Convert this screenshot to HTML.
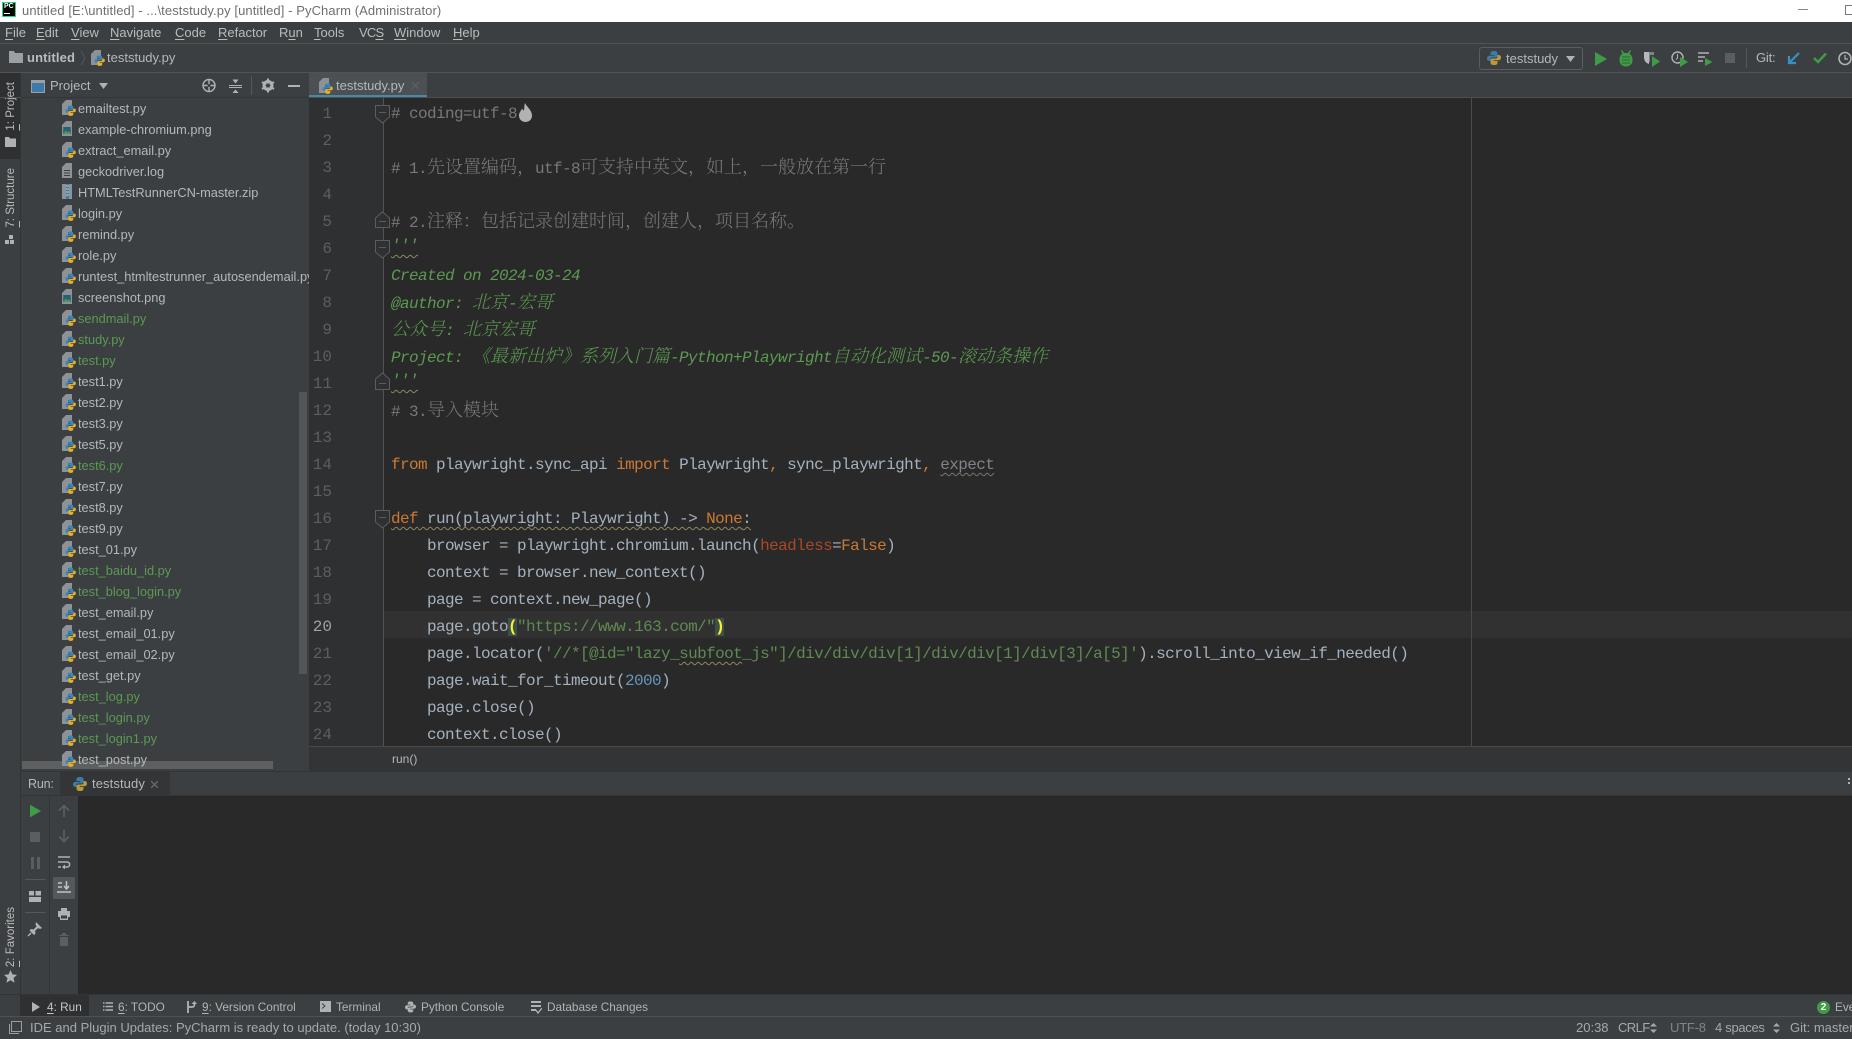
<!DOCTYPE html>
<html><head><meta charset="utf-8"><style>
html,body{margin:0;padding:0;background:#3c3f41}
body{width:1852px;height:1038px;position:relative;overflow:hidden;font-family:"Liberation Sans","Noto Sans CJK SC",sans-serif;color:#bbbbbb;font-size:13px}
.a{position:absolute;white-space:nowrap}
.m{top:22px;height:22px;line-height:22px;font-size:13px;color:#bbb}
u{text-decoration-thickness:1px;text-underline-offset:2px}
#files{left:21px;top:97.5px;width:288px;height:673px;overflow:hidden}
#files div{position:relative;height:21px;line-height:21px;padding-left:57px;font-size:12.8px;color:#b4b8ba;white-space:nowrap}
#files div.g{color:#5a9a52}
#files svg{position:absolute;left:41px;top:2px}
.l{position:absolute;left:391px;height:27px;line-height:27px;margin:0;font-family:"Liberation Mono","Noto Serif CJK SC",monospace;font-size:16px;letter-spacing:-.6px;color:#a4b1bf;white-space:pre}
.l .c{font-family:"Noto Serif CJK SC","Noto Sans CJK SC",serif;font-size:18px;font-weight:300;letter-spacing:0}
.cm{color:#787878}
.ds{color:#5c9a52;font-style:italic}
.k{color:#cc7832}
.s{color:#5f8a52}
.n{position:absolute;width:24px;left:308px;text-align:right;height:27px;line-height:27px;font-family:"Liberation Mono",monospace;font-size:16px;color:#5c5f61;margin-top:1px}
.w{text-decoration:underline wavy #8a8a60 1px;text-underline-offset:3px}
.b{font-size:11.8px;height:22px;line-height:22px;top:996px;color:#b0b4b6}
.st{font-size:13px;height:22px;line-height:22px;top:1017px;color:#a5a9ab}
.v{writing-mode:vertical-rl;transform:rotate(180deg);font-size:11.5px;color:#bbb;left:4px;line-height:14px}
</style></head><body>
<svg width="0" height="0" style="position:absolute"><defs>
<symbol id="py" viewBox="0 0 14 16"><path d="M0 4 L4 0 H10 V6 H6 V15 H0Z" fill="#8d9296"/><g transform="translate(3.5,5.5) scale(.74)"><path d="M7 0 C4 0 3.5 1 3.5 2.5 V4 H7.2 V4.8 H2.5 C1 4.8 0 6 0 7.3 C0 9 1 10 2.3 10 H3.5 V8.2 C3.5 7 4.5 6.5 5.5 6.5 H8.5 C9.8 6.5 10.5 5.7 10.5 4.5 V2.5 C10.5 1 9.5 0 7 0Z" fill="#3a85bd"/><path d="M7 14 C10 14 10.5 13 10.5 11.5 V10 H6.8 V9.2 H11.5 C13 9.2 14 8 14 6.7 C14 5 13 4 11.7 4 H10.5 V5.8 C10.5 7 9.5 7.5 8.5 7.5 H5.5 C4.2 7.5 3.5 8.3 3.5 9.5 V11.5 C3.5 13 4.5 14 7 14Z" fill="#e6b02c"/></g></symbol>
<symbol id="img" viewBox="0 0 14 16"><path d="M0 4 L4 0 H10 V15 H0Z" fill="#8d9296"/><rect x="1.2" y="6" width="7.6" height="7" fill="#2a5e78"/><path d="M1.2 13 L4 9.5 L6 11.5 L7.5 10 L8.8 13Z" fill="#4f9a58"/></symbol>
<symbol id="log" viewBox="0 0 14 16"><path d="M0 4 L4 0 H10 V15 H0Z" fill="#8d9296"/><path d="M2 7.5H8M2 10H8M2 12.5H8" stroke="#3c3f41" stroke-width="1"/></symbol>
<symbol id="zip" viewBox="0 0 14 16"><rect x="0" y="0" width="10" height="15" fill="#8d9296"/><rect x="4" y="0" width="3" height="15" fill="#3a7ca5"/><path d="M4 2h3M4 5h3M4 8h3M4 11h3" stroke="#c8d0d4" stroke-width="1"/></symbol>
<symbol id="pyb" viewBox="0 0 14 14"><path d="M7 0 C4 0 3.5 1 3.5 2.5 V4 H7.2 V4.8 H2.5 C1 4.8 0 6 0 7.3 C0 9 1 10 2.3 10 H3.5 V8.2 C3.5 7 4.5 6.5 5.5 6.5 H8.5 C9.8 6.5 10.5 5.7 10.5 4.5 V2.5 C10.5 1 9.5 0 7 0Z" fill="#3c7ba8"/><path d="M7 14 C10 14 10.5 13 10.5 11.5 V10 H6.8 V9.2 H11.5 C13 9.2 14 8 14 6.7 C14 5 13 4 11.7 4 H10.5 V5.8 C10.5 7 9.5 7.5 8.5 7.5 H5.5 C4.2 7.5 3.5 8.3 3.5 9.5 V11.5 C3.5 13 4.5 14 7 14Z" fill="#b99a3a"/></symbol>
<symbol id="pl" viewBox="0 0 12 14"><path d="M0 0 L12 7 L0 14Z" fill="#3f9b46"/></symbol>
</defs></svg>

<!-- title bar -->
<div class="a" style="left:0;top:0;width:1852px;height:22px;background:#fff"></div>
<div class="a" style="left:2px;top:2px;width:14px;height:15px;background:#000;border:1px solid #21d789;box-sizing:border-box;color:#fff;font:bold 7px/8px 'Liberation Sans',sans-serif;padding-left:1px">PC<div style="width:6px;height:1px;background:#fff;margin-top:2px"></div></div>
<div class="a" style="left:22px;top:0;height:22px;line-height:21px;font-size:13px;letter-spacing:.09px;color:#6f6f6f">untitled [E:\untitled] - ...\teststudy.py [untitled] - PyCharm (Administrator)</div>
<div class="a" style="left:1798px;top:9px;width:10px;height:1px;background:#8a8a8a"></div>
<div class="a" style="left:1845px;top:5px;width:8px;height:8px;border:1px solid #777"></div>

<!-- menu -->
<div class="a m" style="left:5px"><u>F</u>ile</div>
<div class="a m" style="left:36px"><u>E</u>dit</div>
<div class="a m" style="left:71px"><u>V</u>iew</div>
<div class="a m" style="left:110px"><u>N</u>avigate</div>
<div class="a m" style="left:175px"><u>C</u>ode</div>
<div class="a m" style="left:218px"><u>R</u>efactor</div>
<div class="a m" style="left:279px">R<u>u</u>n</div>
<div class="a m" style="left:314px"><u>T</u>ools</div>
<div class="a m" style="left:359px;letter-spacing:-.8px">VC<u>S</u></div>
<div class="a m" style="left:394px"><u>W</u>indow</div>
<div class="a m" style="left:453px"><u>H</u>elp</div>
<div class="a" style="left:0;top:43px;width:1852px;height:1px;background:#515455"></div>

<!-- nav bar -->
<svg class="a" style="left:9px;top:51px" width="14" height="12"><path d="M0 0H5L6 2H14V12H0Z" fill="#9aa0a4"/></svg>
<div class="a" style="left:27px;top:47px;line-height:22px;font-weight:bold;font-size:13px;letter-spacing:.15px;color:#b8bcbe">untitled</div>
<svg class="a" style="left:80px;top:50px" width="6" height="16"><path d="M1 1L5 8L1 15" fill="none" stroke="#55585a"/></svg>
<svg class="a" style="left:91px;top:50px" width="14" height="16"><use href="#py"/></svg>
<div class="a" style="left:107px;top:47px;line-height:22px;font-size:13px;color:#b4b8ba">teststudy.py</div>

<!-- run config -->
<div class="a" style="left:1479px;top:47px;width:102px;height:21px;border:1px solid #5a5d5f;border-radius:3px"></div>
<svg class="a" style="left:1487px;top:51px" width="14" height="14"><use href="#pyb"/></svg>
<div class="a" style="left:1506px;top:48px;line-height:22px;font-size:13px;color:#b4b8ba">teststudy</div>
<svg class="a" style="left:1566px;top:56px" width="9" height="6"><path d="M0 0H9L4.5 6Z" fill="#aeb2b4"/></svg>
<svg class="a" style="left:1595px;top:52px" width="12" height="14"><use href="#pl"/></svg>
<svg class="a" style="left:1619px;top:50px" width="14" height="17"><path d="M3 0L5 3H9L11 0L12 1L10.5 3.5C12.5 5 13.5 7 13.5 10C13.5 14 11 16.5 7 16.5C3 16.5 .5 14 .5 10C.5 7 1.5 5 3.5 3.5L2 1Z" fill="#3f9b46"/><path d="M3 7H11M3 10H11M3 13H11" stroke="#2c6a30"/></svg>
<svg class="a" style="left:1644px;top:51px" width="16" height="16"><path d="M0 1H5V13C2 12 0 10 0 6Z" fill="#b4b8ba"/><path d="M5 1H10V4H6V11H5Z" fill="#7f8385"/><path d="M8 5L16 10.5L8 16Z" fill="#3f9b46"/></svg>
<svg class="a" style="left:1671px;top:51px" width="17" height="16"><circle cx="6.5" cy="6.5" r="5.5" fill="none" stroke="#aeb2b4" stroke-width="1.4"/><path d="M6.5 3V7L5 8.5" fill="none" stroke="#aeb2b4"/><path d="M9 6L17 11L9 16Z" fill="#3f9b46"/></svg>
<svg class="a" style="left:1698px;top:52px" width="15" height="14"><path d="M0 1H11M0 5H7M0 9H5" stroke="#aeb2b4" stroke-width="1.6"/><path d="M7 6L14.5 10L7 14Z" fill="#3f9b46"/></svg>
<div class="a" style="left:1725px;top:53px;width:10px;height:10px;background:#5c5d5f"></div>
<div class="a" style="left:1746px;top:48px;width:1px;height:20px;background:#55585a"></div>
<div class="a" style="left:1756px;top:47px;line-height:22px;font-size:13px;letter-spacing:-.2px;color:#b4b8ba">Git:</div>
<svg class="a" style="left:1787px;top:52px" width="13" height="13"><path d="M12 1L2.5 10.5M2 4V11H9" fill="none" stroke="#3592c4" stroke-width="2.2"/></svg>
<svg class="a" style="left:1813px;top:52px" width="14" height="12"><path d="M1 6L5 10L13 1.5" fill="none" stroke="#3f9b46" stroke-width="2.4"/></svg>
<svg class="a" style="left:1838px;top:51px" width="14" height="15"><circle cx="7" cy="7.5" r="6" fill="none" stroke="#aeb2b4" stroke-width="1.6"/><path d="M7 4V8H10" fill="none" stroke="#aeb2b4" stroke-width="1.2"/></svg>
<div class="a" style="left:0;top:72px;width:1852px;height:1px;background:#515455"></div>

<!-- left stripe -->
<div class="a" style="left:0;top:73px;width:20px;height:86px;background:#2e3032"></div>
<div class="a" style="left:20px;top:73px;width:1px;height:921px;background:#323436"></div>
<div class="a v" style="top:82px"><u>1</u>: Project</div>
<svg class="a" style="left:5px;top:137px" width="11" height="10"><path d="M0 0H4L5 1.5H11V10H0Z" fill="#aeb2b4"/></svg>
<div class="a v" style="top:168px"><u>7</u>: Structure</div>
<svg class="a" style="left:5px;top:235px" width="10" height="10"><path d="M4 0H8V4H4ZM0 5H4V9H0ZM5 5H9V9H5Z" fill="#aeb2b4"/></svg>
<div class="a v" style="top:907px"><u>2</u>: Favorites</div>
<svg class="a" style="left:4px;top:970px" width="13" height="13"><path d="M6.5 0L8.4 4.4L13 4.9L9.5 8L10.6 12.8L6.5 10.2L2.4 12.8L3.5 8L0 4.9L4.6 4.4Z" fill="#aeb2b4"/></svg>

<!-- project toolbar -->
<svg class="a" style="left:31px;top:80px" width="14" height="13"><rect x=".5" y=".5" width="13" height="12" fill="#3c7ba8" stroke="#9aa0a4"/><rect x="1" y="1" width="12" height="2" fill="#9aa0a4"/></svg>
<div class="a" style="left:50px;top:75px;line-height:22px;font-size:13px;color:#b4b8ba">Project</div>
<svg class="a" style="left:99px;top:83px" width="9" height="6"><path d="M0 0H9L4.5 6Z" fill="#aeb2b4"/></svg>
<svg class="a" style="left:202px;top:78px" width="14" height="15"><circle cx="7" cy="7.5" r="6" fill="none" stroke="#aeb2b4" stroke-width="1.4"/><path d="M7 1V14M1 7.5H13" stroke="#aeb2b4" stroke-width="1.4"/><circle cx="7" cy="7.5" r="1.5" fill="#3c3f41"/></svg>
<svg class="a" style="left:229px;top:78px" width="13" height="15"><path d="M0 7.5H13M0 9.5H13" stroke="#aeb2b4" stroke-width="1"/><path d="M6.5 5.5L3.5 1.5H9.5ZM6.5 11.5L3.5 15H9.5Z" fill="#aeb2b4"/></svg>
<div class="a" style="left:251px;top:76px;width:1px;height:19px;background:#55585a"></div>
<svg class="a" style="left:261px;top:78px" width="14" height="15"><circle cx="7" cy="7.5" r="4.2" fill="none" stroke="#aeb2b4" stroke-width="2.6"/><path d="M7 .5V14.5M1 4L13 11M1 11L13 4" stroke="#aeb2b4" stroke-width="2"/><circle cx="7" cy="7.5" r="2" fill="#3c3f41"/></svg>
<div class="a" style="left:288px;top:85px;width:12px;height:2px;background:#aeb2b4"></div>

<!-- tab -->
<div class="a" style="left:309px;top:73px;width:118px;height:24px;background:#4c5052"></div>
<div class="a" style="left:309px;top:95px;width:118px;height:2px;background:#4a88a8"></div>
<svg class="a" style="left:319px;top:78px" width="14" height="16"><use href="#py"/></svg>
<div class="a" style="left:336px;top:75px;line-height:22px;font-size:13px;color:#b4b8ba">teststudy.py</div>
<svg class="a" style="left:412px;top:82px" width="7" height="7"><path d="M0 0L7 7M7 0L0 7" stroke="#5f6365" stroke-width="1.1"/></svg>
<div class="a" style="left:0;top:97px;width:1852px;height:1px;background:#4b4e50"></div>
<div class="a" style="left:21px;top:97px;width:288px;height:1px;background:#333537"></div>

<!-- file tree -->
<div class="a" style="left:299px;top:392px;width:8px;height:282px;background:#535658"></div>
<div class="a" style="left:22px;top:761px;width:251px;height:8px;background:#5d5f61"></div>
<div class="a" id="files">
<div><svg width="14" height="16"><use href="#py"/></svg>emailtest.py</div>
<div><svg width="14" height="16"><use href="#img"/></svg>example-chromium.png</div>
<div><svg width="14" height="16"><use href="#py"/></svg>extract_email.py</div>
<div><svg width="14" height="16"><use href="#log"/></svg>geckodriver.log</div>
<div><svg width="14" height="16"><use href="#zip"/></svg>HTMLTestRunnerCN-master.zip</div>
<div><svg width="14" height="16"><use href="#py"/></svg>login.py</div>
<div><svg width="14" height="16"><use href="#py"/></svg>remind.py</div>
<div><svg width="14" height="16"><use href="#py"/></svg>role.py</div>
<div><svg width="14" height="16"><use href="#py"/></svg>runtest_htmltestrunner_autosendemail.py</div>
<div><svg width="14" height="16"><use href="#img"/></svg>screenshot.png</div>
<div class="g"><svg width="14" height="16"><use href="#py"/></svg>sendmail.py</div>
<div class="g"><svg width="14" height="16"><use href="#py"/></svg>study.py</div>
<div class="g"><svg width="14" height="16"><use href="#py"/></svg>test.py</div>
<div><svg width="14" height="16"><use href="#py"/></svg>test1.py</div>
<div><svg width="14" height="16"><use href="#py"/></svg>test2.py</div>
<div><svg width="14" height="16"><use href="#py"/></svg>test3.py</div>
<div><svg width="14" height="16"><use href="#py"/></svg>test5.py</div>
<div class="g"><svg width="14" height="16"><use href="#py"/></svg>test6.py</div>
<div><svg width="14" height="16"><use href="#py"/></svg>test7.py</div>
<div><svg width="14" height="16"><use href="#py"/></svg>test8.py</div>
<div><svg width="14" height="16"><use href="#py"/></svg>test9.py</div>
<div><svg width="14" height="16"><use href="#py"/></svg>test_01.py</div>
<div class="g"><svg width="14" height="16"><use href="#py"/></svg>test_baidu_id.py</div>
<div class="g"><svg width="14" height="16"><use href="#py"/></svg>test_blog_login.py</div>
<div><svg width="14" height="16"><use href="#py"/></svg>test_email.py</div>
<div><svg width="14" height="16"><use href="#py"/></svg>test_email_01.py</div>
<div><svg width="14" height="16"><use href="#py"/></svg>test_email_02.py</div>
<div><svg width="14" height="16"><use href="#py"/></svg>test_get.py</div>
<div class="g"><svg width="14" height="16"><use href="#py"/></svg>test_log.py</div>
<div class="g"><svg width="14" height="16"><use href="#py"/></svg>test_login.py</div>
<div class="g"><svg width="14" height="16"><use href="#py"/></svg>test_login1.py</div>
<div><svg width="14" height="16"><use href="#py"/></svg>test_post.py</div>
</div>

<!-- editor -->
<div class="a" style="left:309px;top:98px;width:1543px;height:648px;background:#292929"></div>
<div class="a" style="left:309px;top:98px;width:74px;height:648px;background:#2e3031"></div>
<div class="a" style="left:383px;top:98px;width:1px;height:648px;background:#505254"></div>
<div class="a" style="left:1471px;top:98px;width:1px;height:648px;background:#4b4b4b"></div>
<div class="a" style="left:384px;top:611px;width:1468px;height:27px;background:#313131"></div>
<div class="a" style="left:1471px;top:611px;width:1px;height:27px;background:#4b4b4b"></div>

<div class="n" style="top:100px">1</div><div class="n" style="top:127px">2</div><div class="n" style="top:154px">3</div><div class="n" style="top:181px">4</div><div class="n" style="top:208px">5</div><div class="n" style="top:235px">6</div><div class="n" style="top:262px">7</div><div class="n" style="top:289px">8</div><div class="n" style="top:316px">9</div><div class="n" style="top:343px">10</div><div class="n" style="top:370px">11</div><div class="n" style="top:397px">12</div><div class="n" style="top:424px">13</div><div class="n" style="top:451px">14</div><div class="n" style="top:478px">15</div><div class="n" style="top:505px">16</div><div class="n" style="top:532px">17</div><div class="n" style="top:559px">18</div><div class="n" style="top:586px">19</div><div class="n" style="top:613px;color:#a4a3a3">20</div><div class="n" style="top:640px">21</div><div class="n" style="top:667px">22</div><div class="n" style="top:694px">23</div><div class="n" style="top:721px">24</div>

<svg class="a" style="left:375px;top:98px" width="16" height="460" fill="#2e3031" stroke="#5a5c5e" stroke-width="1">
<path d="M.5 7.5H14.5V19L7.5 25L.5 19Z"/><path d="M4 14.5H11"/>
<path d="M.5 129.5V120L7.5 114L14.5 120V129.5Z"/><path d="M4 123.5H11"/>
<path d="M.5 142.5H14.5V154L7.5 160L.5 154Z"/><path d="M4 149.5H11"/>
<path d="M.5 291.5V281L7.5 275L14.5 281V291.5Z"/><path d="M4 285.5H11"/>
<path d="M.5 412.5H14.5V424L7.5 430L.5 424Z"/><path d="M4 419.5H11"/>
</svg>

<pre class="l" style="top:101px"><span class="cm"># coding=utf-8</span></pre>
<svg class="a" style="left:519px;top:103px" width="13" height="19"><path d="M6 0C7 3 13 7 13 12.5C13 16.5 10 19 6.5 19C3 19 0 16.5 0 12.5C0 9.5 2 8 3 5.5C4 7 4.5 7.5 5 7.5C5.5 5 5 2.5 6 0Z" fill="#b0b2b4"/></svg>
<pre class="l" style="top:153px"><span class="cm"># 1.<span class="c">先设置编码，</span>utf-8<span class="c">可支持中英文，如上，一般放在第一行</span></span></pre>
<pre class="l" style="top:207px"><span class="cm"># 2.<span class="c">注释：包括记录创建时间，创建人，项目名称。</span></span></pre>
<pre class="l" style="top:233px"><span class="ds" style="text-decoration:underline wavy #8a8a60 1px;text-underline-offset:4px">'''</span></pre>
<pre class="l" style="top:263px"><span class="ds">Created on 2024-03-24</span></pre>
<pre class="l" style="top:288px"><span class="ds">@author: <span class="c">北京</span>-<span class="c">宏哥</span></span></pre>
<pre class="l" style="top:315px"><span class="ds"><span class="c">公众号</span>: <span class="c">北京宏哥</span></span></pre>
<pre class="l" style="top:342px"><span class="ds">Project: <span class="c">《最新出炉》系列入门篇</span>-Python+Playwright<span class="c">自动化测试</span>-50-<span class="c">滚动条操作</span></span></pre>
<pre class="l" style="top:368px"><span class="ds" style="text-decoration:underline wavy #8a8a60 1px;text-underline-offset:4px">'''</span></pre>
<pre class="l" style="top:396px"><span class="cm"># 3.<span class="c">导入模块</span></span></pre>
<pre class="l" style="top:452px"><span class="k">from</span> playwright.sync_api <span class="k">import</span> Playwright<span class="k">,</span> sync_playwright<span class="k">,</span> <span style="color:#7f8587;text-decoration:underline wavy #77796a 1px;text-underline-offset:3px">expect</span></pre>
<pre class="l" style="top:506px"><span class="w"><span class="k">def</span> run(playwright: Playwright) -&gt; <span class="k">None</span>:</span></pre>
<pre class="l" style="top:533px">    browser = playwright.chromium.launch(<span style="color:#aa4926">headless</span>=<span class="k">False</span>)</pre>
<pre class="l" style="top:560px">    context = browser.new_context()</pre>
<pre class="l" style="top:587px">    page = context.new_page()</pre>
<pre class="l" style="top:614px">    page.goto<span style="background:#3a514c;color:#ffef28;font-weight:bold">(</span><span class="s">"https://www.163.com/"</span><span style="background:#3a514c;color:#ffef28;font-weight:bold">)</span></pre>
<pre class="l" style="top:641px">    page.locator(<span class="s">'//*[@id="lazy_<span class="w">subfoot</span>_js"]/div/div/div[1]/div/div[1]/div[3]/a[5]'</span>).scroll_into_view_if_needed()</pre>
<pre class="l" style="top:668px">    page.wait_for_timeout(<span style="color:#6897bb">2000</span>)</pre>
<pre class="l" style="top:695px">    page.close()</pre>
<pre class="l" style="top:722px">    context.close()</pre>

<!-- breadcrumb -->
<div class="a" style="left:309px;top:746px;width:1543px;height:1px;background:#48494a"></div>
<div class="a" style="left:309px;top:747px;width:1543px;height:24px;background:#323436"></div>
<div class="a" style="left:392px;top:748px;line-height:22px;font-size:12px;color:#b4b8ba">run()</div>
<div class="a" style="left:21px;top:771px;width:1831px;height:1px;background:#323436"></div>

<!-- run panel -->
<div class="a" style="left:28px;top:773px;line-height:22px;font-size:12.5px;letter-spacing:-.2px;color:#b4b8ba">Run:</div>
<div class="a" style="left:60px;top:772px;width:110px;height:23px;background:#333537"></div>
<svg class="a" style="left:73px;top:777px" width="14" height="14"><use href="#pyb"/></svg>
<div class="a" style="left:92px;top:773px;line-height:22px;font-size:13px;letter-spacing:.1px;color:#b4b8ba">teststudy</div>
<svg class="a" style="left:151px;top:781px" width="7" height="7"><path d="M0 0L7 7M7 0L0 7" stroke="#6c7072" stroke-width="1.2"/></svg>
<div class="a" style="left:1848px;top:778px;width:2px;height:2px;background:#aeb2b4;box-shadow:0 4px #aeb2b4"></div>
<div class="a" style="left:21px;top:795px;width:1831px;height:1px;background:#323436"></div>
<div class="a" style="left:78px;top:796px;width:1774px;height:198px;background:#292929"></div>
<div class="a" style="left:49px;top:796px;width:1px;height:198px;background:#323436"></div>

<svg class="a" style="left:30px;top:804px" width="11" height="14"><use href="#pl"/></svg>
<div class="a" style="left:30px;top:832px;width:10px;height:10px;background:#5c5d5f"></div>
<div class="a" style="left:31px;top:857px;width:3px;height:12px;background:#5c5d5f;box-shadow:6px 0 #5c5d5f"></div>
<div class="a" style="left:25px;top:879px;width:20px;height:1px;background:#55585a"></div>
<svg class="a" style="left:29px;top:891px" width="12" height="11"><path d="M0 0H5V4.5H0ZM6.5 0H12V4.5H6.5ZM0 6H12V11H0Z" fill="#aeb2b4"/></svg>
<div class="a" style="left:25px;top:912px;width:20px;height:1px;background:#55585a"></div>
<svg class="a" style="left:27px;top:921px" width="16" height="16"><path d="M9 1L15 7L13 8L11 7L8 10L8.5 12.5L7 14L2.5 9.5L4 8L6.5 8.5L9.5 5.5L8.5 3.5Z" fill="#aeb2b4"/><path d="M4 12L1 15" stroke="#aeb2b4" stroke-width="1.4"/></svg>

<svg class="a" style="left:58px;top:804px" width="12" height="13"><path d="M6 13V2M1 6.5L6 1.5L11 6.5" fill="none" stroke="#5c5f61" stroke-width="1.6"/></svg>
<svg class="a" style="left:58px;top:830px" width="12" height="13"><path d="M6 0V11M1 6.5L6 11.5L11 6.5" fill="none" stroke="#5c5f61" stroke-width="1.6"/></svg>
<svg class="a" style="left:57px;top:856px" width="14" height="13"><path d="M1 1H13M1 6H10C13.5 6 13.5 11 10 11H7M1 11H4" fill="none" stroke="#aeb2b4" stroke-width="1.5"/><path d="M8 8.5V13.5L5 11Z" fill="#aeb2b4"/></svg>
<div class="a" style="left:53px;top:877px;width:22px;height:22px;background:#55585a;border-radius:2px"></div>
<svg class="a" style="left:57px;top:881px" width="14" height="13"><path d="M1 2H5M1 6H5M0 11H14" stroke="#c0c4c6" stroke-width="1.5"/><path d="M9.5 0V7M7 5L9.5 8L12 5" fill="none" stroke="#c0c4c6" stroke-width="1.5"/></svg>
<svg class="a" style="left:58px;top:908px" width="12" height="12"><path d="M3 0H9V3H12V9H10V12H2V9H0V3H3Z" fill="#aeb2b4"/><rect x="3" y="7.5" width="6" height="3" fill="#3c3f41"/></svg>
<svg class="a" style="left:59px;top:933px" width="10" height="13"><path d="M0 2H10V3H0ZM3 0H7V2H3ZM1 4H9V13H1Z" fill="#5c5f61"/></svg>

<!-- bottom tool bar -->
<div class="a" style="left:0;top:994px;width:1852px;height:1px;background:#323436"></div>
<div class="a" style="left:20px;top:995px;width:69px;height:21px;background:#2e3032"></div>
<svg class="a" style="left:32px;top:1002px" width="8" height="10"><path d="M0 0L8 5L0 10Z" fill="#aeb2b4"/></svg>
<div class="a b" style="left:47px;color:#c4c8ca"><u>4</u>: Run</div>
<svg class="a" style="left:103px;top:1002px" width="10" height="9"><path d="M0 1H10M0 4.5H10M0 8H10" stroke="#aeb2b4" stroke-width="1.4" stroke-dasharray="1.5 1 8"/></svg>
<div class="a b" style="left:118px"><u>6</u>: TODO</div>
<svg class="a" style="left:186px;top:1001px" width="11" height="12"><path d="M2 0V12M2 6H6C8 6 8.5 5 8.5 2.5" fill="none" stroke="#aeb2b4" stroke-width="1.8"/><path d="M5.5 3L8.5 0L11 3Z" fill="#aeb2b4"/></svg>
<div class="a b" style="left:202px"><u>9</u>: Version Control</div>
<svg class="a" style="left:320px;top:1001px" width="11" height="11"><rect width="11" height="11" fill="#aeb2b4"/><path d="M2 2.5L5 5L2 7.5" fill="none" stroke="#3c3f41"/></svg>
<div class="a b" style="left:336px">Terminal</div>
<svg class="a" style="left:405px;top:1001px" width="11" height="12" viewBox="0 0 14 14"><path d="M7 0C4 0 3.5 1 3.5 2.5V4H7.2V4.8H2.5C1 4.8 0 6 0 7.3C0 9 1 10 2.3 10H3.5V8.2C3.5 7 4.5 6.5 5.5 6.5H8.5C9.8 6.5 10.5 5.7 10.5 4.5V2.5C10.5 1 9.5 0 7 0Z M7 14C10 14 10.5 13 10.5 11.5V10H6.8V9.2H11.5C13 9.2 14 8 14 6.7C14 5 13 4 11.7 4H10.5V5.8C10.5 7 9.5 7.5 8.5 7.5H5.5C4.2 7.5 3.5 8.3 3.5 9.5V11.5C3.5 13 4.5 14 7 14Z" fill="#aeb2b4"/></svg>
<div class="a b" style="left:421px">Python Console</div>
<svg class="a" style="left:531px;top:1000px" width="11" height="14"><path d="M0 1H10V3H0ZM0 5H10V7H0ZM0 9H5V11H0Z" fill="#aeb2b4"/><path d="M5 10L7 13L11 8" fill="none" stroke="#aeb2b4" stroke-width="1.3"/></svg>
<div class="a b" style="left:547px">Database Changes</div>
<div class="a" style="left:1817px;top:1001px;width:13px;height:13px;border-radius:50%;background:#3f9b46;color:#fff;font:bold 10px/13px 'Liberation Sans',sans-serif;text-align:center">2</div>
<div class="a b" style="left:1835px">Event Log</div>

<!-- status bar -->
<div class="a" style="left:0;top:1016px;width:1852px;height:1px;background:#4f5254"></div>
<svg class="a" style="left:9px;top:1021px" width="13" height="13"><rect x="2.5" y=".5" width="10" height="10" fill="none" stroke="#9a9ea0"/><path d="M.5 3V12.5H10" fill="none" stroke="#9a9ea0"/></svg>
<div class="a st" style="left:30px">IDE and Plugin Updates: PyCharm is ready to update. (today 10:30)</div>
<div class="a st" style="left:1576px">20:38</div>
<div class="a st" style="left:1618px;letter-spacing:-.6px">CRLF</div>
<svg class="a" style="left:1650px;top:1023px" width="7" height="10"><path d="M3.5 0L7 3.5H0ZM3.5 10L7 6.5H0Z" fill="#a5a9ab"/></svg>
<div class="a st" style="left:1670px;letter-spacing:-.2px;color:#808486">UTF-8</div>
<div class="a st" style="left:1715px;letter-spacing:-.3px">4 spaces</div>
<svg class="a" style="left:1773px;top:1023px" width="7" height="10"><path d="M3.5 0L7 3.5H0ZM3.5 10L7 6.5H0Z" fill="#a5a9ab"/></svg>
<div class="a st" style="left:1790px">Git: master</div>
</body></html>
